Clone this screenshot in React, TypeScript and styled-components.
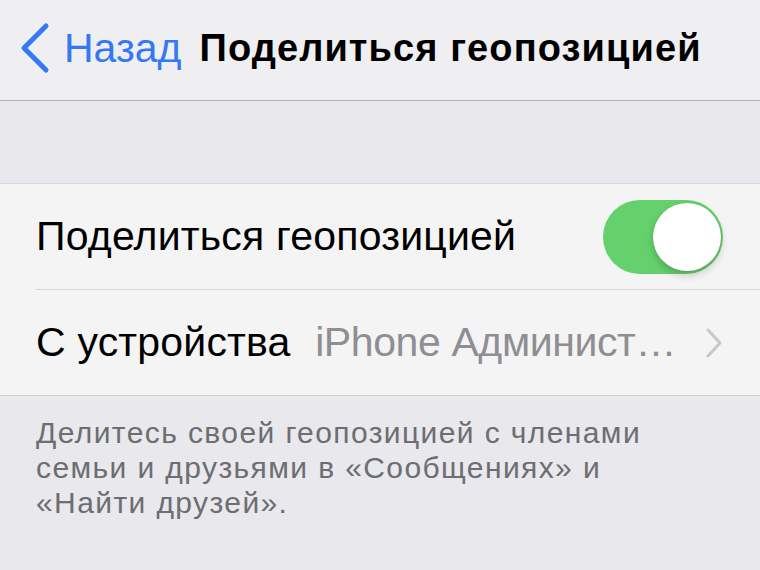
import { createGlobalStyle } from "styled-components";
import styled from "styled-components";

const GlobalStyle = createGlobalStyle`
  html, body {
    margin: 0;
    padding: 0;
    background: #e8e8ed;
  }
  body {
    font-family: "Liberation Sans", Arial, sans-serif;
    -webkit-font-smoothing: antialiased;
  }
`;

export default function App() {
  return (
    <Screen>
      <GlobalStyle />
      <NavBar>
        <BackButton>
          <svg width="32" height="52" viewBox="0 0 32 52">
            <path
              d="M28 4 L6 26 L28 48"
              fill="none"
              stroke="#3478f6"
              strokeWidth="5"
              strokeLinecap="round"
              strokeLinejoin="round"
            />
          </svg>
          <BackLabel>Назад</BackLabel>
        </BackButton>
        <Title>Поделиться геопозицией</Title>
      </NavBar>

      <Spacer />

      <Group>
        <Row>
          <Label>Поделиться геопозицией</Label>
          <Toggle $on>
            <Knob />
          </Toggle>
        </Row>
        <Row $last>
          <Label>С устройства</Label>
          <Value>iPhone Админист…</Value>
          <svg width="18" height="30" viewBox="0 0 18 30">
            <path
              d="M3 2 L15 15 L3 28"
              fill="none"
              stroke="#c7c7cc"
              strokeWidth="3"
              strokeLinecap="round"
              strokeLinejoin="round"
            />
          </svg>
        </Row>
      </Group>

      <Footer>
        Делитесь своей геопозицией с членами семьи и друзьями в «Сообщениях» и
        «Найти друзей».
      </Footer>
    </Screen>
  );
}

const Screen = styled.div`
  width: 760px;
  height: 570px;
  overflow: hidden;
  background: #e8e8ed;
`;

const NavBar = styled.div`
  height: 101px;
  box-sizing: border-box;
  display: flex;
  align-items: center;
  padding: 0 0 4px 18px;
  background: #efeff2;
  border-bottom: 1px solid #b2b2b7;
`;

const BackButton = styled.div`
  display: flex;
  align-items: center;
  gap: 14px;
`;

const BackLabel = styled.span`
  font-size: 41px;
  color: #3478f6;
`;

const Title = styled.div`
  margin-left: 18px;
  font-size: 38px;
  font-weight: bold;
  letter-spacing: 1.1px;
  color: #000;
`;

const Spacer = styled.div`
  height: 82px;
`;

const Group = styled.div`
  background: #f4f4f4;
  border-top: 1px solid #d6d6da;
  border-bottom: 1px solid #cfcfd3;
  padding-left: 36px;
`;

const Row = styled.div<{ $last?: boolean }>`
  height: 105px;
  display: flex;
  align-items: center;
  padding-right: 37px;
  border-bottom: ${(p) => (p.$last ? "none" : "1px solid #d4d4d8")};
`;

const Label = styled.div`
  flex: 1;
  font-size: 41px;
  letter-spacing: 0.2px;
  color: #000;
  white-space: nowrap;
`;

const Value = styled.div`
  font-size: 41px;
  letter-spacing: -0.4px;
  color: #8e8e93;
  margin-right: 29px;
  white-space: nowrap;
`;

const Toggle = styled.div<{ $on?: boolean }>`
  width: 120px;
  height: 74px;
  border-radius: 37px;
  background: ${(p) => (p.$on ? "#65d16d" : "#e5e5ea")};
  display: flex;
  align-items: center;
  justify-content: ${(p) => (p.$on ? "flex-end" : "flex-start")};
  padding: 2px;
  box-sizing: border-box;
`;

const Knob = styled.div`
  width: 68px;
  height: 68px;
  border-radius: 50%;
  background: #fff;
  box-shadow: 0 4px 8px rgba(0, 0, 0, 0.2), 0 0 1px rgba(0, 0, 0, 0.15);
`;

const Footer = styled.div`
  padding: 19px 100px 0 36px;
  font-size: 30px;
  letter-spacing: 1.4px;
  line-height: 35px;
  color: #6d6d72;
`;
